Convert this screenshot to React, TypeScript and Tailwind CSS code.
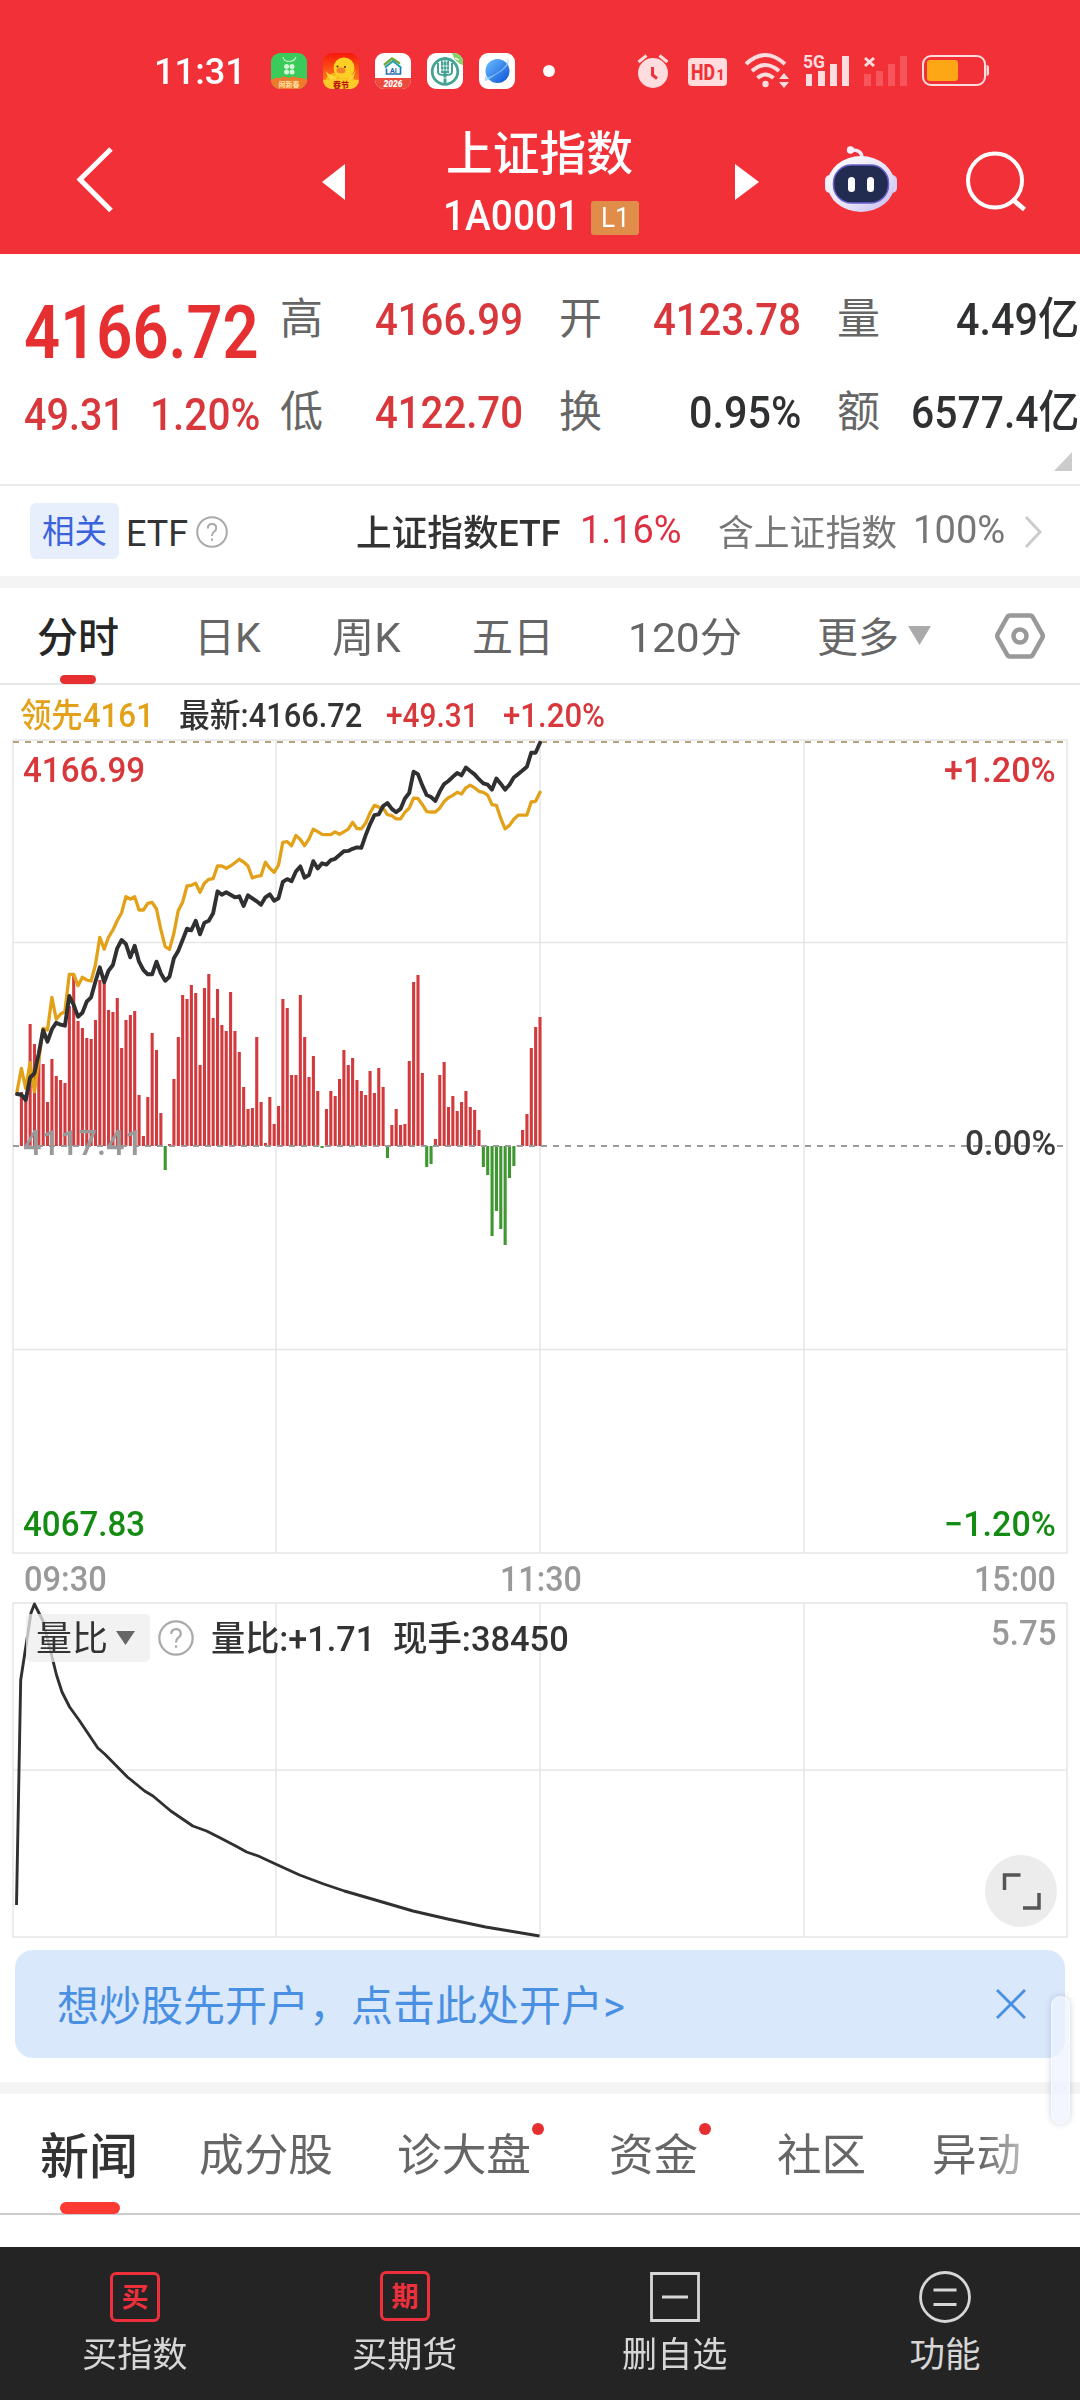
import React, { useLayoutEffect, useRef, useState } from "react";

/* Single line of text condensed horizontally to fill the width of its box. */
function Fit({ className = "", children }: { className?: string; children: React.ReactNode }) {
  const outer = useRef<HTMLSpanElement>(null);
  const inner = useRef<HTMLSpanElement>(null);
  const [scale, setScale] = useState(1);
  useLayoutEffect(() => {
    if (outer.current && inner.current) {
      setScale(outer.current.clientWidth / inner.current.offsetWidth);
    }
  }, []);
  return (
    <span ref={outer} className={`block shrink-0 leading-none ${className}`}>
      <span ref={inner} className="inline-block origin-left whitespace-pre" style={{ transform: `scaleX(${scale})` }}>
        {children}
      </span>
    </span>
  );
}

/* ---------- status bar ---------- */

function AppIcons() {
  return (
    <div className="ml-[25px] flex gap-4">
      <svg width="36" height="36" viewBox="0 0 36 36">
        <defs>
          <clipPath id="tile"><rect width="36" height="36" rx="9" /></clipPath>
          <linearGradient id="planet" x1="0" y1="0" x2="1" y2="1">
            <stop offset="0" stopColor="#6cc0ff" /><stop offset="1" stopColor="#0b50d8" />
          </linearGradient>
          <linearGradient id="duck" x1="0" y1="0" x2="0" y2="1">
            <stop offset="0" stopColor="#f5190c" /><stop offset="1" stopColor="#ff9c1a" />
          </linearGradient>
        </defs>
        <g clipPath="url(#tile)">
          <rect width="36" height="36" fill="#3bcb5b" />
          <path d="M12 4c1 6 11 6 13 0" fill="none" stroke="#bff2c4" strokeWidth="1.2" />
          <g fill="#d5f7d6">
            <circle cx="15.600" cy="13.500" r="2.500" /><circle cx="21" cy="13.500" r="2.500" />
            <circle cx="15.600" cy="19" r="2.500" /><circle cx="21" cy="19" r="2.500" />
          </g>
          <path d="M0 27q5-3 9-2 4-3 9 0 5-3 9 0 5-1 9 2v9H0z" fill="#ef7a2d" />
          <text x="18" y="33.500" fontSize="7" fontWeight="700" textAnchor="middle" fill="#ffe3a0">闹新春</text>
        </g>
      </svg>
      <svg width="36" height="36" viewBox="0 0 36 36">
        <g clipPath="url(#tile)">
          <rect width="36" height="36" fill="url(#duck)" />
          <ellipse cx="17" cy="27" rx="14" ry="8" fill="#f9b81d" />
          <path d="M3 18q4 6 11 5l-2 6q-8-3-9-11z" fill="#ffd53a" />
          <path d="M33 13q0 8-7 11l-2 5q9-3 9-16z" fill="#ffd53a" />
          <circle cx="21" cy="15" r="10.500" fill="#fccf25" />
          <ellipse cx="18" cy="17.500" rx="4.500" ry="3" fill="#f5832a" />
          <circle cx="14.500" cy="13.500" r="1" fill="#5a2508" /><circle cx="22" cy="14" r="1" fill="#5a2508" />
          <path d="M0 27q18-2 36 0v9H0z" fill="#ffc928" />
          <text x="18" y="34.500" fontSize="8" fontWeight="900" textAnchor="middle" fill="#b81d0d">春节</text>
        </g>
      </svg>
      <svg width="36" height="36" viewBox="0 0 36 36">
        <g clipPath="url(#tile)">
          <rect width="36" height="36" fill="#fff" />
          <path d="M9 12L17 5.500l8 5" fill="none" stroke="#78a83a" strokeWidth="2.400" />
          <path d="M10 14.500l8-6.500 8.500 7" fill="none" stroke="#1f9fb0" strokeWidth="2" />
          <path d="M11.500 15.500v5.500h14v-6" fill="none" stroke="#1e71b5" strokeWidth="1.600" />
          <text x="18.500" y="19.500" fontSize="7" fontWeight="700" textAnchor="middle" fill="#1e62a8">AI</text>
          <path d="M0 25h36v11H0z" fill="#ed4a3e" />
          <text x="18" y="33.500" fontSize="8.500" fontStyle="italic" fontWeight="900" textAnchor="middle" fill="#fff">2026</text>
        </g>
      </svg>
      <svg width="36" height="36" viewBox="0 0 36 36">
        <g clipPath="url(#tile)">
          <rect width="36" height="36" fill="#fff" />
          <circle cx="18" cy="18.500" r="12.800" fill="none" stroke="#45a393" strokeWidth="2.800" />
          <path d="M18 4v28" stroke="#45a393" strokeWidth="3" />
          <path d="M11 10v9q0 3 6 3M25 10v9q0 3-6 3M15 6v13h6V6" fill="none" stroke="#45a393" strokeWidth="2" />
          <path d="M15 8h6M14.500 13h7M14 17h8M14 25h8" stroke="#fff" strokeWidth=".8" />
          <path d="M25 0h11v12q-8-2-11-12z" fill="#82d36a" />
          <path d="M28 5l4 2" stroke="#fff" strokeWidth="1.200" />
        </g>
      </svg>
      <svg width="36" height="36" viewBox="0 0 36 36">
        <rect width="36" height="36" rx="9" fill="#fff" />
        <circle cx="18.500" cy="18" r="12" fill="url(#planet)" />
        <path d="M26 7q4-2 4 1 0 6-12 13Q9 27 7 28q-3 0 0-6-1 3 3 2Q25 18 29 8q0-1-3-1z" fill="#9bd2fb" opacity=".75" />
      </svg>
    </div>
  );
}

function StatusIcons() {
  return (
    <svg className="ml-[82px]" width="356" height="48" viewBox="638 47 356 48" fill="#ffdcdd">
      <circle cx="654" cy="73" r="15" />
      <path d="M639.500 62l8-6.500M668.500 62l-8-6.500" stroke="#ffdcdd" strokeWidth="3" />
      <path d="M653.500 67v8l4.500 3.500" fill="none" stroke="#f23037" strokeWidth="3" />
      <rect x="689" y="58" width="39" height="28" rx="4" />
      <text y="80" fontWeight="800" fill="#f23037">
        <tspan x="692" fontSize="22" textLength="24" lengthAdjust="spacingAndGlyphs">HD</tspan>
        <tspan x="717.500" fontSize="14">1</tspan>
      </text>
      <g fill="none" stroke="#ffdcdd" strokeWidth="4">
        <path d="M747 64Q766 46 786 64" /><path d="M753 71Q766 59 780 71" /><path d="M758.500 78Q766 71 774.500 78" />
      </g>
      <circle cx="766.500" cy="84" r="3.200" />
      <path d="M780 79h10l-5-6zM780 82h10l-5 6z" />
      <text x="804" y="68" fontSize="19" fontWeight="700" textLength="22" lengthAdjust="spacingAndGlyphs">5G</text>
      <path d="M807 74h6v12h-6zM819 71h7v15h-7zM831 64h7v22h-7zM843 56h7v30h-7z" />
      <path d="M866 58l9 8M875 58l-9 8" stroke="#ffdcdd" strokeWidth="3" />
      <path opacity=".22" d="M865 74h7v12h-7zM877 71h7v15h-7zM889 64h7v22h-7zM901 56h7v30h-7z" />
      <rect x="924" y="56" width="62" height="29" rx="8" fill="none" stroke="#ffdcdd" strokeWidth="2" />
      <rect x="928" y="60" width="31" height="21" rx="3" fill="#fda616" />
      <path d="M987.500 65q2.500 0 2.500 3v5q0 3-2.500 3z" />
    </svg>
  );
}

function Header() {
  return (
    <header className="h-[254px] bg-[#f23037] text-white">
      <div className="flex h-[142px] items-center">
        <Fit className="ml-[154px] w-[92px] text-[37px] font-medium">11:31</Fit>
        <AppIcons />
        <span className="ml-[28px] size-3 rounded-full bg-white" />
        <StatusIcons />
      </div>
      <div className="flex items-start">
        <svg className="ml-[75px] mt-1" width="40" height="68" viewBox="75 146 40 68" fill="none" stroke="#fff" strokeWidth="5">
          <path d="M111 149L80 179.500l31 31" />
        </svg>
        <svg className="ml-[207px] mt-[22px]" width="23" height="36" viewBox="0 0 23 36"><path d="M0 18L23 0v36z" fill="#fff" /></svg>
        <div className="ml-[98px] flex w-[198px] flex-col">
          <Fit className="-mt-[12px] ml-[3px] w-[187px] text-[47px] font-medium">上证指数</Fit>
          <div className="mt-[22px] flex items-center">
            <Fit className="-mt-1 w-[136px] text-[42px] font-medium">1A0001</Fit>
            <div className="ml-[12px] flex h-[34px] w-[48px] items-center justify-center rounded-[3px] bg-[#e08d49]">
              <Fit className="w-[29px] text-[27px]">L1</Fit>
            </div>
          </div>
        </div>
        <svg className="ml-[94px] mt-[22px]" width="24" height="36" viewBox="0 0 24 36"><path d="M24 18L0 0v36z" fill="#fff" /></svg>
        <svg className="ml-[65px] mt-1" width="74" height="68" viewBox="824 146 74 68">
          <defs>
            <linearGradient id="shell" x1="0" y1="0" x2="1" y2="1">
              <stop offset="0" stopColor="#fff" /><stop offset=".6" stopColor="#e6e2f8" /><stop offset="1" stopColor="#c3b7ee" />
            </linearGradient>
          </defs>
          <path d="M850 150q12-1 12 8" fill="none" stroke="#efe9fb" strokeWidth="3.500" />
          <circle cx="850.500" cy="150" r="3.700" fill="#f6f1ff" />
          <rect x="825" y="175" width="10" height="18" rx="5" fill="#eeeafd" />
          <rect x="887" y="175" width="10" height="18" rx="5" fill="#d6d0f6" />
          <ellipse cx="861" cy="184" rx="33.500" ry="28" fill="url(#shell)" />
          <rect x="833.500" y="165" width="55" height="38" rx="18" fill="#222b50" stroke="#6a62cc" strokeWidth="1.500" />
          <rect x="848" y="177" width="7" height="15" rx="3.500" fill="#fff" />
          <rect x="867" y="177" width="7" height="15" rx="3.500" fill="#fff" />
        </svg>
        <svg className="ml-[67px] mt-[9px]" width="64" height="64" viewBox="965 151 64 64" fill="none" stroke="#fff" strokeWidth="4">
          <circle cx="995" cy="180.500" r="27" />
          <path d="M1012 199l12.500 10.500" strokeWidth="4.800" />
        </svg>
      </div>
    </header>
  );
}

/* ---------- quote ---------- */

function Cell({ label, width, tone, children }: { label: string; width: string; tone: string; children: string }) {
  return (
    <div className="flex h-[93px] items-center justify-between pt-[3px]">
      <span className="text-[43px] leading-none text-[#666]">{label}</span>
      <Fit className={`text-[45px] font-medium ${width} ${tone}`}>{children}</Fit>
    </div>
  );
}

function Quote() {
  const red = "text-[#d8373b]";
  const ink = "text-[#2f3032]";
  return (
    <section className="flex h-[232px] border-b-2 border-[#ebebeb] pt-[17px]">
      <div className="w-[280px] pl-[24px] pt-[9px]">
        <div className="flex h-[106px] items-center">
          <Fit className="w-[235px] text-[74px] font-semibold text-[#e52f31]">4166.72</Fit>
        </div>
        <div className="flex h-[56px] items-center text-[45px] font-medium text-[#d8373b]">
          <Fit className="w-[101px]">49.31</Fit>
          <Fit className="ml-[25px] w-[110px]">1.20%</Fit>
        </div>
      </div>
      <div className="w-[243px]">
        <Cell label="高" width="w-[148px]" tone={red}>4166.99</Cell>
        <Cell label="低" width="w-[148px]" tone={red}>4122.70</Cell>
      </div>
      <div className="ml-[36px] w-[242px]">
        <Cell label="开" width="w-[148px]" tone={red}>4123.78</Cell>
        <Cell label="换" width="w-[112px]" tone={ink}>0.95%</Cell>
      </div>
      <div className="relative ml-[36px] w-[242px]">
        <Cell label="量" width="w-[123px]" tone={ink}>4.49亿</Cell>
        <Cell label="额" width="w-[168px]" tone={ink}>6577.4亿</Cell>
        <svg className="absolute right-[7px] top-[181px]" width="18" height="19" viewBox="0 0 18 19"><path d="M18 0v19H0z" fill="#ccc" /></svg>
      </div>
    </section>
  );
}

function Help({ className, size }: { className: string; size: number }) {
  return (
    <svg className={`shrink-0 ${className}`} width={size} height={size} viewBox="0 0 32 32" fill="none" stroke="#aaa" strokeWidth="2">
      <circle cx="16" cy="16" r="14.800" />
      <path d="M11.800 12.500q0-4.500 4.200-4.500t4.200 4q0 2.500-2.400 4Q16 17.300 16 20M16 22.500v2.200" />
    </svg>
  );
}

function Related() {
  return (
    <section className="flex h-[90px] items-center pt-0.5">
      <div className="-mt-0.5 ml-[30px] flex h-[56px] w-[89px] items-center justify-center rounded-md bg-[#e7eefc] pt-[3px] text-[32.500px] leading-none text-[#3a62dd]">相关</div>
      <Fit className="ml-[7px] w-[62px] pt-[3px] text-[36px] text-[#333]">ETF</Fit>
      <Help className="ml-[8px]" size={32} />
      <Fit className="ml-[128px] w-[204px] pt-[3px] text-[36px] font-medium text-[#333]">上证指数ETF</Fit>
      <Fit className="-mt-[3px] ml-[20px] w-[102px] text-[39px] text-[#dd3043]">1.16%</Fit>
      <Fit className="ml-[36px] w-[179px] pt-[3px] text-[36px] text-[#777]">含上证指数</Fit>
      <Fit className="-mt-[3px] ml-[16px] w-[92px] text-[39px] text-[#777]">100%</Fit>
      <svg className="ml-[19px]" width="20" height="34" viewBox="0 0 20 34" fill="none" stroke="#ccc" strokeWidth="3"><path d="M2 2l14 15L2 32" /></svg>
    </section>
  );
}

function PeriodTabs() {
  return (
    <nav className="relative flex h-[97px] items-center border-b-2 border-[#e8e8e8] text-[41px] text-[#666]">
      <Fit className="ml-[37px] w-[82px] pt-[5px] font-medium text-[#262626]">分时</Fit>
      <Fit className="ml-[75px] w-[67px] pt-[5px]">日K</Fit>
      <Fit className="ml-[71px] w-[69px] pt-[5px]">周K</Fit>
      <Fit className="ml-[71px] w-[82px] pt-[5px]">五日</Fit>
      <Fit className="ml-[74px] w-[114px] pt-[5px]">120分</Fit>
      <Fit className="ml-[75px] w-[82px] pt-[5px]">更多</Fit>
      <svg className="ml-[9px]" width="23" height="19" viewBox="0 0 23 19"><path d="M0 0h23L11.500 19z" fill="#aaa" /></svg>
      <svg className="ml-[64px]" width="50" height="46" viewBox="0 0 50 46" fill="none" stroke="#999" strokeWidth="4.500">
        <path d="M15 2.500h20q2 0 3 2l9 16q1.500 2.500 0 5l-9 16q-1 2-3 2H15q-2 0-3-2l-9-16q-1.500-2.500 0-5l9-16q1-2 3-2z" />
        <circle cx="25" cy="23" r="6.500" />
      </svg>
      <span className="absolute left-[60px] top-[87px] h-[9px] w-[36px] rounded-full bg-[#e62f30]" />
    </nav>
  );
}

/* ---------- charts ---------- */

const STEP = 4.358;
const ZERO = 1146;

const bars = [
  0, 54, 49, 122, 102, 89, 82, 44, 87, 70, 66, 63, 140, 171, 125, 118, 108, 107, 126, 166, 163, 136, 134, 148, 98,
  126, 131, 135, 51, 10, 49, 113, 96, 33, -24, 2, 67, 109, 151, 147, 161, 153, 81, 158, 172, 128, 157, 121, 115, 154,
  115, 94, 59, 37, 38, 109, 44, 3, 49, 22, 40, 147, 138, 71, 71, 151, 109, 69, 90, 55, -2, 37, 55, 50, 67, 96, 81, 88,
  66, 55, 51, 75, 53, 78, 59, -12, 21, 37, 21, 22, 85, 164, 171, 73, -21, -18, 7, 71, 84, 39, 50, 35, 44, 55, 39, 36,
  16, -21, -29, -90, -65, -83, -99, -32, -20, 1, 16, 32, 98, 119, 129,
];

const priceEarly = [
  1122, 1124, 1140, 1073, 1060, 1000, 930, 965, 928, 908, 914, 917, 828, 855, 890, 878, 845, 832, 785, 742, 787, 752,
  735, 685, 660, 672, 712, 677, 725, 750, 763, 763, 725, 760, 782, 770, 715, 693, 660, 626, 631, 602, 643, 608, 602,
  580, 514, 524, 517, 524, 532, 529, 558, 526, 535, 544, 554, 532, 523, 542, 535,
];
const priceLate = [
  470, 462, 468, 440, 425, 458, 450, 410, 431, 416, 420, 407, 403, 392, 381, 380, 374, 370, 371, 335, 303, 276, 274,
  250, 241, 258, 268, 258, 228, 212, 150, 157, 190, 218, 224, 235, 208, 186, 177, 165, 154, 161, 138, 148, 158, 172,
  184, 188, 202, 170, 185, 202, 188, 167, 157, 147, 136, 95, 95, 66,
];
const leadEarly = [
  1115, 1045, 1105, 1028, 1115, 1020, 925, 930, 832, 898, 882, 875, 763, 763, 797, 772, 780, 783, 735, 652, 688, 652,
  630, 602, 578, 530, 537, 530, 570, 570, 550, 547, 567, 628, 680, 688, 640, 572, 547, 498, 496, 490, 517, 490, 478,
  476, 438, 438, 445, 438, 428, 418, 426, 438, 474, 469, 467, 427, 445, 457, 435,
];
const leadLate = [
  355, 353, 365, 335, 347, 365, 345, 317, 324, 332, 333, 333, 325, 332, 325, 317, 297, 315, 316, 300, 270, 248, 253,
  256, 275, 278, 287, 287, 268, 256, 227, 228, 245, 266, 267, 267, 256, 237, 226, 219, 210, 215, 197, 189, 197, 207,
  210, 218, 246, 248, 285, 316, 306, 288, 276, 276, 276, 238, 236, 210,
];

/* The two halves of a series are stored at different resolutions. */
function series(early: number[], late: number[]) {
  return [...early.map((v) => 720 + v / 3), ...late.map((v) => 720 + v / 2.9037)]
    .map((y, i) => `${(17 + i * STEP).toFixed(1)},${y.toFixed(1)}`)
    .join(" ");
}

function PriceChart() {
  return (
    <div className="relative h-[818px] text-[35px] font-medium">
      <svg className="block" width="1080" height="818" viewBox="0 738 1080 818">
        <g stroke="#e6e6e6" strokeWidth="1.500" fill="none">
          <rect x="13" y="740" width="1054" height="813" />
          <path d="M276 740v813M540 740v813M804 740v813M13 942.500h1054M13 1349.500h1054" />
        </g>
        <path d="M13 742h1054" stroke="#b8a07c" strokeWidth="2" strokeDasharray="6 6" />
        {bars.map((h, i) => (
          <rect key={i} x={17 + i * STEP - 1.5} width="3.100" y={h > 0 ? ZERO - h : ZERO} height={Math.abs(h)} fill={h > 0 ? "#d23b3e" : "#3f9731"} />
        ))}
        <path d="M13 1146h1054" stroke="#9a9a9a" strokeWidth="1.800" strokeDasharray="6 6" />
        <g fill="none" strokeLinejoin="round" strokeLinecap="round">
          <polyline points={series(leadEarly, leadLate)} stroke="#e2a118" strokeWidth="3.300" />
          <polyline points={series(priceEarly, priceLate)} stroke="#303032" strokeWidth="3.900" />
        </g>
      </svg>
      <Fit className="absolute left-[23px] top-[15px] w-[122px] text-[#d8373b]">4166.99</Fit>
      <Fit className="absolute right-[24px] top-[15px] w-[112px] text-[#d8373b]">+1.20%</Fit>
      <Fit className="absolute left-[23px] top-[388px] w-[120px] text-[#999]">4117.41</Fit>
      <Fit className="absolute right-[24px] top-[388px] w-[91px] text-[#3a3a3a]">0.00%</Fit>
      <Fit className="absolute left-[23px] top-[769px] w-[122px] text-[#148c14]">4067.83</Fit>
      <Fit className="absolute right-[24px] top-[769px] w-[112px] text-[#148c14]">−1.20%</Fit>
    </div>
  );
}

function VolumeRatioChart() {
  return (
    <div className="relative h-[339px] text-[#333]">
      <svg className="block" width="1080" height="339" viewBox="0 1601 1080 339" fill="none">
        <g stroke="#e6e6e6" strokeWidth="1.500">
          <rect x="13" y="1603" width="1054" height="334" />
          <path d="M276 1603v334M540 1603v334M804 1603v334M13 1770h1054" />
        </g>
        <polyline
          stroke="#303032" strokeWidth="2.900" strokeLinejoin="round"
          points="16.5,1905 20.7,1680 31,1613 34.4,1604 43,1621 49.6,1647 56.5,1675 62,1692 69.6,1707 79,1720 97.8,1748 104.7,1754 113.6,1763 127.4,1777 144.6,1791 153,1796 170.8,1811 192.8,1826 206.6,1831 220.4,1838 237.6,1847 246.6,1852 258.3,1856 275.5,1864 299.6,1875 323.7,1884 344.4,1891 375.4,1900 413,1911 447.7,1919 485.6,1927 509.7,1931 539.5,1936"
        />
      </svg>
      <div className="absolute left-[26px] top-[13px] flex h-[48px] items-center text-[35px]">
        <div className="flex h-full w-[124px] items-center rounded-[5px] bg-[#ededed]/75">
          <Fit className="ml-[10px] w-[72px] pt-[3px]">量比</Fit>
          <svg className="ml-[8px]" width="19" height="14" viewBox="0 0 19 14"><path d="M0 0h19L9.500 14z" fill="#666" /></svg>
        </div>
        <Help className="ml-[8px]" size={36} />
        <Fit className="ml-[17px] w-[164px] pt-[3px] font-medium">量比:+1.71</Fit>
        <Fit className="ml-[18px] w-[176px] pt-[3px] font-medium">现手:38450</Fit>
      </div>
      <Fit className="absolute right-[24px] top-[15px] w-[65px] text-[35px] font-medium text-[#999]">5.75</Fit>
      <svg className="absolute left-[985px] top-[254px]" width="72" height="72" viewBox="0 0 72 72" fill="none" stroke="#555" strokeWidth="3.500">
        <circle cx="36" cy="36" r="36" fill="#ececec" stroke="none" />
        <path d="M19.500 35V20h16M38 53h16V38" />
      </svg>
    </div>
  );
}

/* ---------- news tabs and footer ---------- */

function NewsTabs() {
  return (
    <nav className="relative flex h-[121px] items-center border-b-2 border-[#ccc] pt-1 text-[44px] text-[#666]">
      <Fit className="ml-[40px] w-[98px] pt-1 text-[49px] font-medium text-[#333]">新闻</Fit>
      <Fit className="ml-[61px] w-[134px] pt-px">成分股</Fit>
      <Fit className="ml-[64px] w-[134px] pt-px">诊大盘</Fit>
      <Fit className="ml-[78px] w-[89px] pt-px">资金</Fit>
      <Fit className="ml-[79px] w-[89px] pt-px">社区</Fit>
      <Fit className="ml-[66px] w-[89px] pt-px [mask-image:linear-gradient(to_right,#000_55%,rgba(0,0,0,0.45))]">异动</Fit>
      <span className="absolute left-[532px] top-[29px] size-3 rounded-full bg-[#e62f30]" />
      <span className="absolute left-[699px] top-[29px] size-3 rounded-full bg-[#e62f30]" />
      <span className="absolute left-[60px] top-[108px] h-3 w-[60px] rounded-full bg-[#fb3a33]" />
    </nav>
  );
}

function FooterItem({ label, width, children }: { label: string; width: string; children: React.ReactNode }) {
  return (
    <div className="flex w-[270px] flex-col items-center">
      <div className="flex h-[54px] items-center">{children}</div>
      <Fit className={`mt-[14px] text-[35.500px] ${width}`}>{label}</Fit>
    </div>
  );
}

export default function App() {
  return (
    <div className="relative flex h-[2400px] w-[1080px] flex-col overflow-hidden bg-white font-['Roboto','Noto_Sans_CJK_SC',sans-serif]">
      <Header />
      <Quote />
      <Related />
      <div className="h-3 bg-[#f4f4f4]" />
      <PeriodTabs />
      <div className="flex h-[53px] items-center pt-[7px] text-[33px] font-medium text-[#d8373b]">
        <Fit className="ml-[20px] w-[134px] text-[#e2a118]">领先4161</Fit>
        <Fit className="ml-[25px] w-[183px] text-[#333]">最新:4166.72</Fit>
        <Fit className="ml-[24px] w-[93px]">+49.31</Fit>
        <Fit className="ml-[24px] w-[102px]">+1.20%</Fit>
      </div>
      <PriceChart />
      <div className="flex h-[45px] items-center justify-between px-[24px] pt-px text-[35px] font-medium text-[#999]">
        <Fit className="w-[83px]">09:30</Fit>
        <Fit className="w-[82px]">11:30</Fit>
        <Fit className="w-[82px]">15:00</Fit>
      </div>
      <VolumeRatioChart />
      <div className="mx-[15px] mt-[10px] flex h-[108px] items-center rounded-[18px] bg-[#dae8fb]">
        <Fit className="ml-[42px] w-[568px] pt-[5px] text-[42px] text-[#4a90e2]">想炒股先开户，点击此处开户&gt;</Fit>
        <svg className="ml-[371px]" width="30" height="32" viewBox="0 0 30 32" stroke="#4a90e2" strokeWidth="3"><path d="M1 2l28 28M29 2L1 30" /></svg>
      </div>
      <div className="mt-6 h-3 bg-[#f4f4f4]" />
      <NewsTabs />
      <footer className="mt-[32px] flex h-[153px] bg-[#242424] pt-[23px] text-[#d6d6d6]">
        <FooterItem label="买指数" width="w-[106px]">
          <div className="flex size-[50px] items-center justify-center rounded-md border-3 border-[#ee2f3c] pt-0.5 text-[27px] font-bold leading-none text-[#ee2f3c]">买</div>
        </FooterItem>
        <FooterItem label="买期货" width="w-[106px]">
          <div className="mb-0.5 flex size-[50px] items-center justify-center rounded-md border-3 border-[#ee2f3c] pt-0.5 text-[27px] font-bold leading-none text-[#ee2f3c]">期</div>
        </FooterItem>
        <FooterItem label="删自选" width="w-[106px]">
          <svg width="50" height="52" viewBox="0 0 50 52" fill="none" stroke="#d6d6d6" strokeWidth="2.800"><path d="M1.500 2.500h47v47h-47zM12 26h26" /></svg>
        </FooterItem>
        <FooterItem label="功能" width="w-[71px]">
          <svg width="52" height="52" viewBox="0 0 52 52" fill="none" stroke="#d6d6d6" strokeWidth="2.800"><circle cx="26" cy="26" r="24.500" /><path d="M14.500 19h23M14.500 33.500h23" /></svg>
        </FooterItem>
      </footer>
      <div className="absolute left-[1051px] top-[1996px] h-[128px] w-[19px] rounded-full border border-white/50 bg-[#eef2fd]/70 shadow-[0_0_6px_rgba(90,100,140,0.3)]" />
    </div>
  );
}
